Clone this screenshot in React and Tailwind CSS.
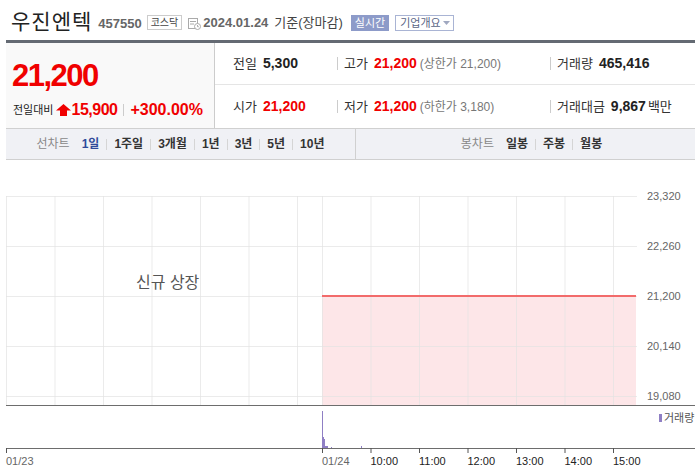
import React from "react";

const font = { fontFamily: '"Liberation Sans", "Noto Sans CJK KR", sans-serif' };

const Sep = () => <span className="inline-block w-px h-[11px] bg-[#d5d5d5] mx-[7px]" />;

const Header = () => (
    <div className="h-[40px] flex items-center pl-[11px] pt-[2px]">
        <span className="text-[21px] text-[#222] tracking-[1px] leading-none">우진엔텍</span>
        <span className="ml-[6px] mt-[5px] text-[13px] font-bold text-[#666]">457550</span>
        <span className="ml-[5px] mt-[3px] border border-[#ccc] text-[10px] text-[#444] px-[3px] h-[15px] leading-[13px]">코스닥</span>
        <svg className="ml-[6px] mt-[4px]" width="13" height="13" viewBox="0 0 13 13">
            <rect x="0.5" y="1.5" width="9" height="10" fill="none" stroke="#aaa" />
            <line x1="2" y1="4.5" x2="8" y2="4.5" stroke="#aaa" />
            <line x1="2" y1="7" x2="6" y2="7" stroke="#aaa" />
            <circle cx="9.5" cy="9.5" r="3" fill="#fff" stroke="#aaa" />
            <path d="M9.5 8v1.7h1.3" fill="none" stroke="#aaa" />
        </svg>
        <span className="ml-[2px] mt-[4px] text-[13px] font-bold text-[#666]">2024.01.24</span>
        <span className="ml-[6px] mt-[4px] text-[13px] text-[#444]">기준(장마감)</span>
        <span className="ml-[8px] mt-[3px] bg-[#8d9bc9] text-white text-[11px] px-[4px] h-[16px] leading-[16px]">실시간</span>
        <span className="ml-[6px] mt-[3px] border border-[#a9b4d4] text-[#5a6585] text-[11px] pl-[4px] pr-[3px] h-[16px] leading-[14px] flex items-center">
            기업개요
            <svg className="ml-[2px]" width="7" height="4" viewBox="0 0 7 4"><path d="M0 0h7L3.5 4z" fill="#a0a8c0" /></svg>
        </span>
    </div>
);

const Cell = ({ label, value, extra, red, sep, width, unit }) => (
    <div className={`flex items-center ${width}`}>
        {sep && <span className="w-px h-[13px] bg-[#ccc] mr-[6px]" />}
        <span className="text-[13px] text-[#333]">{label}</span>
        <span className={`ml-[6px] text-[14px] font-bold ${red ? "text-[#f00000]" : "text-[#222]"}`}>{value}</span>
        {unit && <span className="ml-[2px] text-[13px] text-[#333]">{unit}</span>}
        {extra && <span className="ml-[3px] text-[12px] text-[#777]">{extra}</span>}
    </div>
);

const Info = () => (
    <div className="ml-[6px] border-t-[3px] border-[#646a73] flex h-[88px]">
        <div className="w-[209px] bg-[#f9f9f9] border-r border-[#ccc] pl-[6px] pt-[16px]">
            <div className="text-[31px] font-bold text-[#f00000] tracking-[-1.5px] leading-[34px]">21,200</div>
            <div className="flex items-center mt-[5px]">
                <span className="text-[11px] text-[#222] ml-[1px]">전일대비</span>
                <svg className="ml-[3px]" width="15" height="12" viewBox="0 0 15 12">
                    <path d="M7.5 0L15 6.5H11V12H4V6.5H0z" fill="#f00000" />
                </svg>
                <span className="text-[16px] font-bold text-[#f00000] tracking-[-0.5px]">15,900</span>
                <span className="w-px h-[12px] bg-[#ccc] mx-[6px]" />
                <span className="text-[16px] font-bold text-[#f00000]">+300.00%</span>
            </div>
        </div>
        <div className="flex-1 flex flex-col">
            <div className="h-[42px] border-b border-[#e5e5e5] flex items-center pl-[18px]">
                <Cell label="전일" value="5,300" width="w-[104px]" />
                <Cell label="고가" value="21,200" red sep extra="(상한가 21,200)" width="w-[213px]" />
                <Cell label="거래량" value="465,416" sep />
            </div>
            <div className="flex-1 flex items-center pl-[18px]">
                <Cell label="시가" value="21,200" red width="w-[104px]" />
                <Cell label="저가" value="21,200" red sep extra="(하한가 3,180)" width="w-[213px]" />
                <Cell label="거래대금" value="9,867" sep unit="백만" />
            </div>
        </div>
    </div>
);

const Tabs = () => (
    <div className="ml-[6px] h-[32px] bg-[#f0f1f5] border-y border-[#d0d0d0] flex text-[12px] font-bold">
        <div className="w-[350px] border-r border-[#d0d0d0] flex items-center justify-center">
            <span className="text-[#888] font-normal mr-[12px]">선차트</span>
            <span className="text-[#2f4a9a]">1일</span><Sep />
            <span className="text-[#333]">1주일</span><Sep />
            <span className="text-[#333]">3개월</span><Sep />
            <span className="text-[#333]">1년</span><Sep />
            <span className="text-[#333]">3년</span><Sep />
            <span className="text-[#333]">5년</span><Sep />
            <span className="text-[#333]">10년</span>
        </div>
        <div className="flex-1 flex items-center justify-center pl-[12px]">
            <span className="text-[#888] font-normal mr-[12px]">봉차트</span>
            <span className="text-[#333]">일봉</span><Sep />
            <span className="text-[#333]">주봉</span><Sep />
            <span className="text-[#333]">월봉</span>
        </div>
    </div>
);

// chart coordinates are page y minus 160 (chart starts under the tab bar)
const T = 160;
const hLines = [196, 246, 296, 346, 396];
const yLabels = ["23,320", "22,260", "21,200", "20,140", "19,080"];
const vLines = [6, 54.5, 103, 151.5, 200, 248.5, 297, 322, 370.5, 419, 467.5, 516, 564.5, 613];
const times = [
    { x: 370.5, t: "10:00" },
    { x: 419, t: "11:00" },
    { x: 467.5, t: "12:00" },
    { x: 516, t: "13:00" },
    { x: 564.5, t: "14:00" },
    { x: 613, t: "15:00" },
];

const Chart = () => (
    <svg width="695" height="315" viewBox="0 0 695 315" className="block" style={{ fontFamily: '"Liberation Sans", "Noto Sans CJK KR", sans-serif' }}>
        <rect x="322" y={296 - T} width="314" height={405 - 296} fill="#fde6e8" />
        {hLines.map((y) => (
            <line key={y} x1="6" x2="637" y1={y - T + 0.5} y2={y - T + 0.5} stroke="#e2e2e2" strokeOpacity="0.7" />
        ))}
        {vLines.map((x) => (
            <line key={x} x1={x + 0.5} x2={x + 0.5} y1={196 - T} y2={405 - T} stroke="#e2e2e2" strokeOpacity="0.7" />
        ))}
        <line x1="322" x2="636" y1={296 - T} y2={296 - T} stroke="#f26b6b" strokeWidth="2" />
        {yLabels.map((l, i) => (
            <text key={l} x="647" y={hLines[i] - T + 4} fontSize="11" fill="#666">{l}</text>
        ))}
        <text x="136" y={288 - T} fontSize="16" fill="#555">신규 상장</text>
        <line x1="6" x2="695" y1={405 - T + 0.5} y2={405 - T + 0.5} stroke="#6d6d6d" />
        {/* volume */}
        <rect x="322" y={411 - T} width="1" height="37" fill="#8f7fc4" />
        <rect x="323" y={437 - T} width="1" height="11" fill="#8f7fc4" />
        <rect x="324" y={439 - T} width="1" height="9" fill="#8f7fc4" />
        <rect x="325" y={446 - T} width="3" height="2" fill="#8f7fc4" />
        <rect x="331" y={447 - T} width="1" height="1" fill="#8f7fc4" />
        <rect x="361" y={446 - T} width="1" height="2" fill="#8f7fc4" />
        <rect x="659" y={414 - T} width="3" height="8" fill="#8f7fc4" />
        <text x="664" y={422 - T} fontSize="11" fill="#555">거래량</text>
        <line x1="6" x2="695" y1={448 - T + 0.5} y2={448 - T + 0.5} stroke="#6d6d6d" />
        <line x1="6.5" x2="6.5" y1={448 - T} y2={453 - T} stroke="#555" />
        <line x1="322.5" x2="322.5" y1={448 - T} y2={453 - T} stroke="#555" />
        {times.map(({ x }) => (
            <line key={x} x1={x + 0.5} x2={x + 0.5} y1={448 - T} y2={453 - T} stroke="#555" />
        ))}
        <text x="6" y={465 - T} fontSize="11" fill="#666">01/23</text>
        <text x="322" y={465 - T} fontSize="11" fill="#666">01/24</text>
        {times.map(({ x, t }) => (
            <text key={t} x={x} y={465 - T} fontSize="11" fill="#222">{t}</text>
        ))}
    </svg>
);

export default function App() {
    return (
        <div className="w-[695px] h-[475px] bg-white overflow-hidden" style={font}>
            <Header />
            <Info />
            <Tabs />
            <Chart />
        </div>
    );
}
